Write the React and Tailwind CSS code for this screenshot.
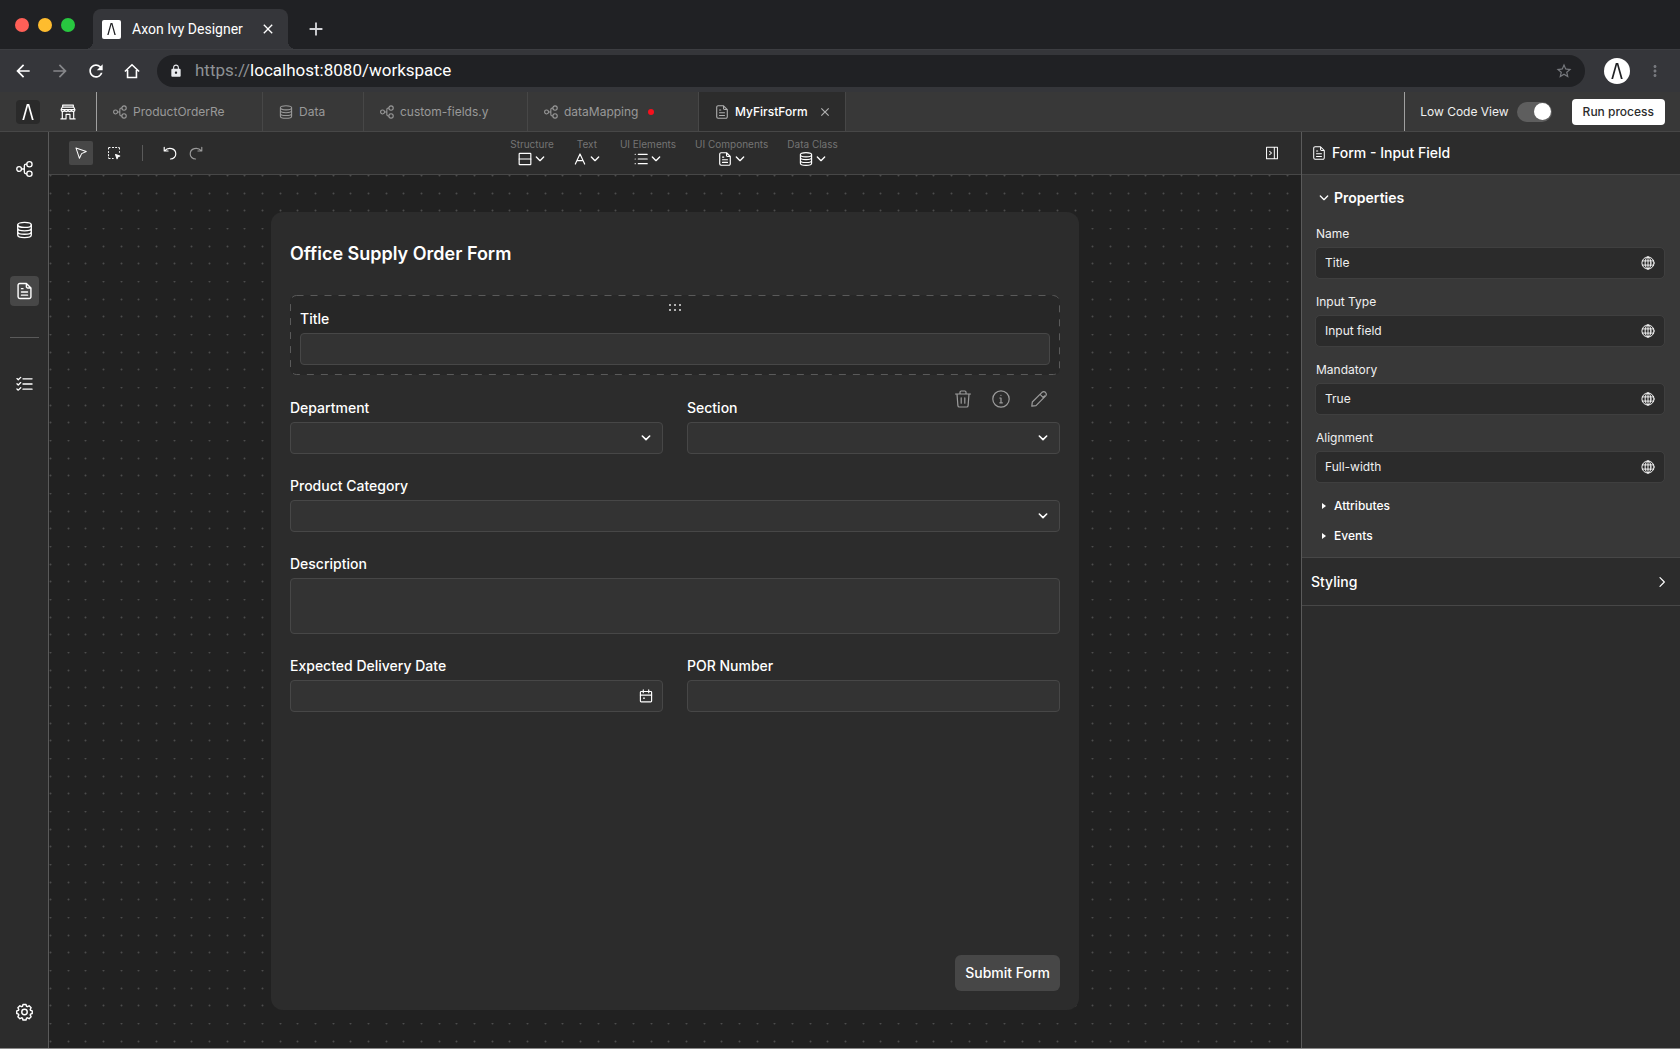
import { useState } from 'react';
import { MdAdd, MdArrowBack, MdArrowForward, MdClose, MdLock, MdMoreVert, MdRefresh, MdStarBorder } from 'react-icons/md';

const Svg = ({ className = 'w-4 h-4', stroke = 1.3, children }) => (
    <svg
        viewBox="0 0 18 18"
        className={`shrink-0 ${className}`}
        fill="none"
        stroke="currentColor"
        strokeWidth={stroke}
        strokeLinecap="round"
        strokeLinejoin="round"
        aria-hidden="true"
    >
        {children}
    </svg>
);

const ProcessIcon = (props) => (
    <Svg {...props}>
        <circle cx="3.3" cy="9" r="2.5" />
        <circle cx="14.2" cy="3.9" r="2.8" />
        <circle cx="14.2" cy="14.1" r="2.8" />
        <path d="M5.8 9H8.8M11.4 3.9h-.8q-1.8 0-1.8 1.8v6.6q0 1.8 1.8 1.8h.8" />
    </Svg>
);

const DatabaseIcon = (props) => (
    <Svg {...props}>
        <ellipse cx="9" cy="3.6" rx="7.2" ry="2.7" />
        <path d="M1.8 3.6v10.8c0 1.5 3.2 2.7 7.2 2.7s7.2-1.2 7.2-2.7V3.6M1.8 7.2c0 1.5 3.2 2.7 7.2 2.7s7.2-1.2 7.2-2.7M1.8 10.8c0 1.5 3.2 2.7 7.2 2.7s7.2-1.2 7.2-2.7" />
    </Svg>
);

const FileIcon = (props) => (
    <Svg {...props}>
        <path d="M11 1H4a1.8 1.8 0 0 0-1.8 1.8v12.4A1.8 1.8 0 0 0 4 17h10a1.8 1.8 0 0 0 1.8-1.8V5.8zM11 1v3.4a1.4 1.4 0 0 0 1.4 1.4h3.4M5.8 6.5h1.6M5.8 10h6.4M5.8 13.4h6.4" />
    </Svg>
);

const ChecklistIcon = (props) => (
    <Svg {...props}>
        <path d="M7.4 3.5H17M7.4 9H17M7.4 14.5H17M1 3.3l1.4 1.2L5 2M1 8.8 2.4 10 5 7.5M1 14.3l1.4 1.2L5 13" />
    </Svg>
);

const GearIcon = (props) => (
    <Svg {...props}>
        <circle cx="9" cy="9" r="2.9" />
        <path d="M7.4 1.1h3.2l.6 2 .8.3 1.9-1 2.1 2.1-1 1.9.3.8 1.9.6v2.8l-1.9.7-.3.8 1 1.9-2.1 2.1-1.9-1-.8.3-.6 2H7.4l-.6-2-.8-.3-1.9 1L2 14l1-1.9-.3-.8-1.9-.7V7.8l1.9-.6.3-.8-1-1.9 2.1-2.1 1.9 1 .8-.3z" />
    </Svg>
);

const StoreIcon = (props) => (
    <Svg {...props}>
        <path d="M3 1.2h12v2.3H3zM2.6 3.5 1.2 6.4h15.6l-1.4-2.9M1.2 6.4c0 2.8 3.9 2.8 3.9 0 0 2.8 3.9 2.8 3.9 0 0 2.8 3.9 2.8 3.9 0 0 2.8 3.9 2.8 3.9 0M2.6 8.6v8M15.4 8.6v8M1 16.8h5.8v-5.2h4.4v5.2H17" />
    </Svg>
);

const GlobeIcon = (props) => (
    <Svg {...props}>
        <circle cx="9" cy="9" r="7.8" />
        <ellipse cx="9" cy="9" rx="3.7" ry="7.8" />
        <path d="M9 1.2v15.6M1.7 6.3h14.6M1.7 11.7h14.6" />
    </Svg>
);

const CursorIcon = (props) => (
    <Svg {...props}>
        <path d="M2.5 2.5 15.8 7l-6 2.8L7 15.8z" />
    </Svg>
);

const SelectAreaIcon = (props) => (
    <Svg {...props}>
        <path d="M2 4V3q0-1 1-1h1M7 2h1.5M11 2h1.5M15 2q1 0 1 1v1M16 7v1M2 7v1.5M2 11v1.5M2 15q0 1 1 1h1M7 16h1" />
        <path d="m11 11 5.5 1.8-2.4 1.2-1.2 2.4z" fill="currentColor" />
    </Svg>
);

const UndoIcon = (props) => (
    <Svg {...props}>
        <path d="M2.5 2.5v4.3h4.3M2.8 6.6C7.5 1.5 15.5 4 15.5 10c0 3.2-2.5 5.8-6 5.8" />
    </Svg>
);

const StructureIcon = (props) => (
    <Svg {...props}>
        <rect x="1.5" y="1.8" width="15" height="14.4" rx=".8" />
        <path d="M1.5 9h15" />
    </Svg>
);

const LetterIcon = (props) => (
    <Svg {...props}>
        <path d="M3 15.5 9 2.5l6 13M5.2 11h7.6" />
    </Svg>
);

const ListIcon = (props) => (
    <Svg {...props}>
        <path d="M5.5 3H17M5.5 9H17M5.5 15H17M1.5 3h.1M1.5 9h.1M1.5 15h.1" />
    </Svg>
);

const PanelIcon = (props) => (
    <Svg {...props}>
        <path d="M2 1.5h14v15H2zM12 1.5v15M6 6.8 8.4 9 6 11.2" />
    </Svg>
);

const ChevronDown = (props) => (
    <Svg {...props}>
        <path d="m3.5 6 5.5 5.5L14.5 6" />
    </Svg>
);

const ChevronRight = (props) => (
    <Svg {...props}>
        <path d="m6 2.5 6.5 6.5L6 15.5" />
    </Svg>
);

const CaretIcon = () => (
    <svg viewBox="0 0 4 6" className="w-1 h-1.5 shrink-0" fill="currentColor" aria-hidden="true">
        <path d="M0 0l4 3-4 3z" />
    </svg>
);

const TrashIcon = (props) => (
    <Svg {...props}>
        <path d="M1.5 4h15M6 4V2.2Q6 1 7.2 1h3.6Q12 1 12 2.2V4M3 4l.9 11.6q.1 1.4 1.5 1.4h7.2q1.4 0 1.5-1.4L15 4M7.2 7.8v5.4M10.8 7.8v5.4" />
    </Svg>
);

const InfoIcon = (props) => (
    <Svg {...props}>
        <circle cx="9" cy="9" r="8.2" />
        <path d="M7.8 8H9v4.8M7.8 12.8h2.6M8.9 5.3h.1" />
    </Svg>
);

const PencilIcon = (props) => (
    <Svg {...props}>
        <path d="M1.8 16.2 2.3 12 12 2.3q1.8-1.5 3.4 0 1.7 1.8.3 3.5L6 15.6zM10.8 5.2l2.2 2.2 1.6-1.6" />
    </Svg>
);

const CalendarIcon = (props) => (
    <Svg {...props}>
        <rect x="1.8" y="3.2" width="14.4" height="13.3" rx="1" />
        <path d="M1.8 7.8h14.4M5.5 1.2v3.6M12.5 1.2v3.6M5.8 11.8h1.2" />
    </Svg>
);

const HomeIcon = () => (
    <svg viewBox="0 0 18 18" className="w-4 h-4" fill="none" stroke="currentColor" strokeWidth="1.8" aria-hidden="true">
        <path d="M1 9.6 9 2l8 7.6M4 8v8.3h10V8" />
    </svg>
);

const Logo = ({ className }) => (
    <svg viewBox="0 0 12 16" className={className} fill="currentColor" aria-hidden="true">
        <path d="M.3 16 4.8 0h2.4l4.5 16h-1.8L6 1.8 2.1 16z" />
    </svg>
);

const DotGrid = () => (
    <svg className="absolute inset-0 w-full h-full" aria-hidden="true">
        <defs>
            <pattern id="dots" width="53" height="53" patternUnits="userSpaceOnUse">
                {[1, 19, 36].map((y) =>
                    [1, 19, 36].map((x) => <circle key={`${x}-${y}`} cx={x + 0.5} cy={y - 0.5} r="1" fill="#4c4c4c" />)
                )}
            </pattern>
        </defs>
        <rect width="100%" height="100%" fill="url(#dots)" />
    </svg>
);

const editorTabs = [
    { label: 'ProductOrderRe', icon: ProcessIcon, width: 'w-[166px]' },
    { label: 'Data', icon: DatabaseIcon, width: 'w-[101px]' },
    { label: 'custom-fields.y', icon: ProcessIcon, width: 'w-[164px]' },
    { label: 'dataMapping', icon: ProcessIcon, width: 'w-[171px]', dirty: true },
    { label: 'MyFirstForm', icon: FileIcon, width: 'w-[147px]', active: true }
];

const palette = [
    { label: 'Structure', icon: StructureIcon },
    { label: 'Text', icon: LetterIcon },
    { label: 'UI Elements', icon: ListIcon },
    { label: 'UI Components', icon: FileIcon },
    { label: 'Data Class', icon: DatabaseIcon }
];

const properties = [
    { id: 'name', label: 'Name', value: 'Title' },
    { id: 'input-type', label: 'Input Type', value: 'Input field' },
    { id: 'mandatory', label: 'Mandatory', value: 'True' },
    { id: 'alignment', label: 'Alignment', value: 'Full-width' }
];

const BrowserChrome = () => (
    <header className="font-[Roboto,sans-serif]">
        <div className="flex items-start h-[49px] bg-[#202124]">
            <div className="flex gap-[9px] pt-[18px] pl-[15px] w-[93px]">
                <span className="w-3.5 h-3.5 rounded-full bg-[#ff5f57]" />
                <span className="w-3.5 h-3.5 rounded-full bg-[#febc2e]" />
                <span className="w-3.5 h-3.5 rounded-full bg-[#28c840]" />
            </div>
            <div className="relative flex items-center mt-[9px] h-10 w-[195px] pl-[9px] pr-3 rounded-t-lg bg-[#35363a] text-white before:absolute before:bottom-0 before:-left-2 before:w-2 before:h-2 before:bg-[radial-gradient(circle_at_0_0,#202124_8px,#35363a_8px)] after:absolute after:bottom-0 after:-right-2 after:w-2 after:h-2 after:bg-[radial-gradient(circle_at_100%_0,#202124_8px,#35363a_8px)]">
                <span className="flex items-center justify-center w-[19px] h-[19px] rounded-xs bg-white text-[#202124]">
                    <Logo className="w-[9px] h-3" />
                </span>
                <span className="ml-[11px] text-sm">Axon Ivy Designer</span>
                <button aria-label="Close tab" className="ml-auto">
                    <MdClose className="w-4 h-4" />
                </button>
            </div>
            <button aria-label="New tab" className="ml-[17px] mt-[18px] text-[#d5d6da]">
                <MdAdd className="w-[22px] h-[22px]" />
            </button>
        </div>
        <div className="flex items-center h-[43px] pl-[13px] pr-4 border-t border-[#3c3d41] bg-[#35363a] text-white">
            <button aria-label="Back"><MdArrowBack className="w-5 h-5" /></button>
            <button aria-label="Forward" className="ml-[17px] text-[#86878a]"><MdArrowForward className="w-5 h-5" /></button>
            <button aria-label="Reload" className="ml-4"><MdRefresh className="w-5 h-5" /></button>
            <button aria-label="Home" className="ml-[18px]"><HomeIcon /></button>
            <div className="flex items-center flex-1 h-8 ml-[17px] pl-3 pr-3 rounded-full bg-[#202124]">
                <MdLock className="w-3.5 h-3.5 text-[#e8eaed]" />
                <label htmlFor="url" className="ml-3 text-[17px] text-[#8e9195]">https://</label>
                <input id="url" defaultValue="localhost:8080/workspace" className="flex-1 min-w-0 bg-transparent text-[17px] outline-none" />
                <button aria-label="Bookmark" className="text-[#77797e]"><MdStarBorder className="w-[18px] h-[18px]" /></button>
            </div>
            <button aria-label="Profile" className="flex items-center justify-center w-[26px] h-[26px] ml-[19px] rounded-full bg-white text-[#202124]">
                <Logo className="w-3 h-4" />
            </button>
            <button aria-label="Menu" className="ml-4 text-[#77797e]"><MdMoreVert className="w-[18px] h-[18px]" /></button>
        </div>
    </header>
);

const EditorTabs = () => {
    const [lowCode, setLowCode] = useState(true);

    return (
        <div className="flex items-stretch h-10 border-b border-[#474747] bg-[#383838]">
            <div className="flex items-center gap-5 w-[97px] pl-4 border-r border-[#a0a0a0]">
                <button aria-label="Axon Ivy" className="flex items-center justify-center w-6 h-6 rounded-sm bg-[#2a2a2a]">
                    <Logo className="w-3 h-4" />
                </button>
                <button aria-label="Market"><StoreIcon className="w-4 h-4" /></button>
            </div>
            <nav className="flex">
                {editorTabs.map(({ label, icon: Icon, width, dirty, active }) => (
                    <div
                        key={label}
                        className={`flex items-center pl-4 border-r border-[#474747] ${width} ${active ? 'bg-[#2c2c2c] text-white' : 'text-[#999]'}`}
                    >
                        <button className={`flex items-center gap-1.5 text-xs ${active ? 'font-medium' : ''}`}>
                            <Icon className={`w-3.5 h-3.5 ${active ? 'text-[#b0b0b0]' : ''}`} stroke={1.4} />
                            {label}
                        </button>
                        {dirty && <span className="w-1.5 h-1.5 ml-2.5 rounded-full bg-[#f7101d]" />}
                        {active && (
                            <button aria-label="Close MyFirstForm" className="ml-2.5 text-[#b0b0b0]">
                                <MdClose className="w-3.5 h-3.5" />
                            </button>
                        )}
                    </div>
                ))}
            </nav>
            <div className="flex items-center ml-auto pl-[15px] pr-[15px] border-l border-[#a0a0a0]">
                <label htmlFor="low-code" className="text-xs text-[#f0f0f0]">Low Code View</label>
                <input
                    id="low-code"
                    type="checkbox"
                    checked={lowCode}
                    onChange={() => setLowCode(!lowCode)}
                    className="appearance-none flex items-center w-[35px] h-5 ml-2 px-px rounded-full bg-[#5e5e5e] before:w-[17px] before:h-[17px] before:rounded-full before:bg-white checked:before:ml-auto"
                />
                <button className="h-[26px] ml-5 px-[11px] rounded-sm bg-white text-xs font-medium text-[#2c2c2c]">Run process</button>
            </div>
        </div>
    );
};

const Sidebar = () => (
    <aside className="flex flex-col items-center w-[49px] pl-px pt-[22px] pb-[21px] gap-[31px] border-r border-[#5a5a5a] bg-[#2c2c2c]">
        <button aria-label="Processes" className="flex items-center justify-center w-[29px] h-[30px]"><ProcessIcon className="w-[17px] h-[18px]" stroke={1.4} /></button>
        <button aria-label="Data" className="flex items-center justify-center w-[29px] h-[30px]"><DatabaseIcon className="w-[17px] h-[18px]" stroke={1.4} /></button>
        <button aria-label="Forms" className="flex items-center justify-center w-[29px] h-[30px] rounded-sm bg-[#474747]"><FileIcon className="w-[17px] h-[18px]" stroke={1.5} /></button>
        <div className="w-[29px] h-px bg-[#5a5a5a]" />
        <button aria-label="Tasks" className="flex items-center justify-center w-[29px] h-[30px]"><ChecklistIcon className="w-[17px] h-[18px]" stroke={1.4} /></button>
        <button aria-label="Settings" className="flex items-center justify-center w-[29px] h-[30px] mt-auto"><GearIcon className="w-[17px] h-[18px]" stroke={1.5} /></button>
    </aside>
);

const Toolbar = () => (
    <div className="flex items-center h-[43px] pl-5 pr-4 border-b border-[#474747] bg-[#2c2c2c]">
        <div className="flex items-center flex-1">
            <button aria-label="Select" className="flex items-center justify-center w-6 h-6 rounded-xs bg-[#474747]"><CursorIcon className="w-3.5 h-3.5" /></button>
            <button aria-label="Select area" className="ml-3.5"><SelectAreaIcon className="w-3.5 h-3.5" /></button>
            <span className="w-px h-4 ml-[21px] bg-[#5a5a5a]" />
            <button aria-label="Undo" className="ml-[19px]"><UndoIcon className="w-4 h-4" /></button>
            <button aria-label="Redo" className="ml-2.5 text-[#9a9a9a]"><UndoIcon className="w-4 h-4 -scale-x-100" /></button>
        </div>
        <div className="flex gap-[19px] pb-0.5">
            {palette.map(({ label, icon: Icon }) => (
                <button key={label} className="flex flex-col items-center min-w-7">
                    <span className="text-[10px] leading-[14px] text-[#747474]">{label}</span>
                    <span className="flex items-center gap-0.5 h-4">
                        <Icon className="w-3.5 h-3.5" stroke={1.5} />
                        <ChevronDown className="w-3 h-3" stroke={2} />
                    </span>
                </button>
            ))}
        </div>
        <div className="flex justify-end flex-1 pr-1.5">
            <button aria-label="Toggle panel"><PanelIcon className="w-3.5 h-3.5" /></button>
        </div>
    </div>
);

const fieldStyle = 'block w-full rounded-sm border border-[#474747] bg-[#333] px-2 text-sm text-white outline-none';

const Field = ({ id, label, children }) => (
    <div className="flex flex-col flex-1 gap-0.5">
        <label htmlFor={id} className="self-start text-sm leading-6 font-medium">{label}</label>
        {children}
    </div>
);

const SelectField = ({ id, label }) => (
    <Field id={id} label={label}>
        <div className="relative">
            <select id={id} className={`${fieldStyle} h-8 appearance-none`}>
                <option value="" />
            </select>
            <ChevronDown className="absolute right-[11px] top-2.5 w-3 h-3 pointer-events-none" stroke={2.4} />
        </div>
    </Field>
);

const DashedOutline = () => (
    <svg className="absolute top-0 left-0 w-[calc(100%-1px)] h-[calc(100%-1px)] overflow-visible pointer-events-none" aria-hidden="true">
        <rect x=".5" y=".5" width="100%" height="100%" rx="6" fill="none" stroke="#5a5a5a" strokeDasharray="7 7" />
    </svg>
);

const FormCanvas = () => (
    <div className="relative flex flex-col flex-1 items-center pt-[37px] pb-[38px] bg-[#212121]">
        <DotGrid />
        <form className="relative flex flex-col flex-1 w-full max-w-[808px] px-[19px] pt-7 pb-[19px] rounded-xl bg-[#2c2c2c]" onSubmit={(e) => e.preventDefault()}>
            <h1 className="mb-7 text-lg leading-[27px] font-semibold">Office Supply Order Form</h1>
            <div className="flex flex-col gap-5">
                <div className="relative mb-px px-2.5 pt-3 pb-2.5 rounded-md bg-[#272727]">
                    <DashedOutline />
                    <Field id="title" label="Title">
                        <input id="title" className={`${fieldStyle} h-8`} />
                    </Field>
                    <svg viewBox="0 0 12 7" className="absolute top-[9px] left-1/2 -translate-x-1/2 w-3 h-[7px]" fill="#e0e0e0" aria-hidden="true">
                        {[1, 6, 11].map((x) => [1, 6].map((y) => <circle key={`${x}-${y}`} cx={x} cy={y} r="1" />))}
                    </svg>
                    <div className="absolute top-full right-3 mt-[15px] flex gap-5 text-[#9c9c9c]">
                        <button type="button" aria-label="Delete"><TrashIcon className="w-[18px] h-[18px]" stroke={1.2} /></button>
                        <button type="button" aria-label="Info"><InfoIcon className="w-[18px] h-[18px]" stroke={1.2} /></button>
                        <button type="button" aria-label="Edit"><PencilIcon className="w-[18px] h-[18px]" stroke={1.2} /></button>
                    </div>
                </div>
                <div className="flex gap-6">
                    <SelectField id="department" label="Department" />
                    <SelectField id="section" label="Section" />
                </div>
                <SelectField id="category" label="Product Category" />
                <Field id="description" label="Description">
                    <textarea id="description" className={`${fieldStyle} h-14 resize-none`} />
                </Field>
                <div className="flex gap-6">
                    <Field id="delivery" label="Expected Delivery Date">
                        <div className="relative">
                            <input id="delivery" className={`${fieldStyle} h-8`} />
                            <CalendarIcon className="absolute right-2.5 top-[9px] w-3.5 h-3.5 pointer-events-none" stroke={1.5} />
                        </div>
                    </Field>
                    <Field id="por" label="POR Number">
                        <input id="por" className={`${fieldStyle} h-8`} />
                    </Field>
                </div>
            </div>
            <button className="self-end mt-auto h-9 px-2.5 rounded-md bg-[#474747] text-sm font-medium">Submit Form</button>
        </form>
    </div>
);

const PropertiesPanel = () => (
    <aside className="w-[379px] border-l border-[#5a5a5a] bg-[#2c2c2c]">
        <h2 className="flex items-center gap-1.5 h-[43px] pl-2.5 border-b border-[#474747] text-sm font-medium">
            <FileIcon className="w-3.5 h-3.5" />
            Form - Input Field
        </h2>
        <section className="pl-3.5 pr-4 pb-1.5 border-b border-[#474747] bg-[#383838]">
            <button className="flex items-center gap-1 h-[45px] pl-0.5 text-sm font-semibold">
                <ChevronDown className="w-3 h-3" stroke={2} />
                Properties
            </button>
            <div className="flex flex-col gap-3.5 pt-1 pb-[9px]">
                {properties.map(({ id, label, value }) => (
                    <div key={id} className="flex flex-col gap-1">
                        <label htmlFor={id} className="self-start text-xs leading-5 text-[#f0f0f0]">{label}</label>
                        <div className="flex items-center h-[30px] px-[9px] rounded-sm bg-[#2b2b2b] outline outline-[#3f3f3f]">
                            <input id={id} defaultValue={value} className="flex-1 min-w-0 bg-transparent text-xs text-[#f0f0f0] outline-none" />
                            <GlobeIcon className="w-3.5 h-3.5" stroke={1.2} />
                        </div>
                    </div>
                ))}
            </div>
            {['Attributes', 'Events'].map((label) => (
                <button key={label} className="flex items-center gap-2 h-[30px] pl-1.5 text-xs font-medium">
                    <CaretIcon />
                    {label}
                </button>
            ))}
        </section>
        <button className="flex items-center justify-between w-full h-12 pl-[9px] pr-3 border-b border-[#474747] text-sm font-medium">
            Styling
            <ChevronRight className="w-3 h-3" stroke={1.8} />
        </button>
    </aside>
);

export default function App() {
    return (
        <div className="flex flex-col min-h-screen border-b border-[#8a8a8a] bg-[#212121] font-[Inter,sans-serif] text-white">
            <BrowserChrome />
            <EditorTabs />
            <div className="flex flex-1">
                <Sidebar />
                <main className="flex flex-col flex-1 min-w-0">
                    <Toolbar />
                    <FormCanvas />
                </main>
                <PropertiesPanel />
            </div>
        </div>
    );
}
